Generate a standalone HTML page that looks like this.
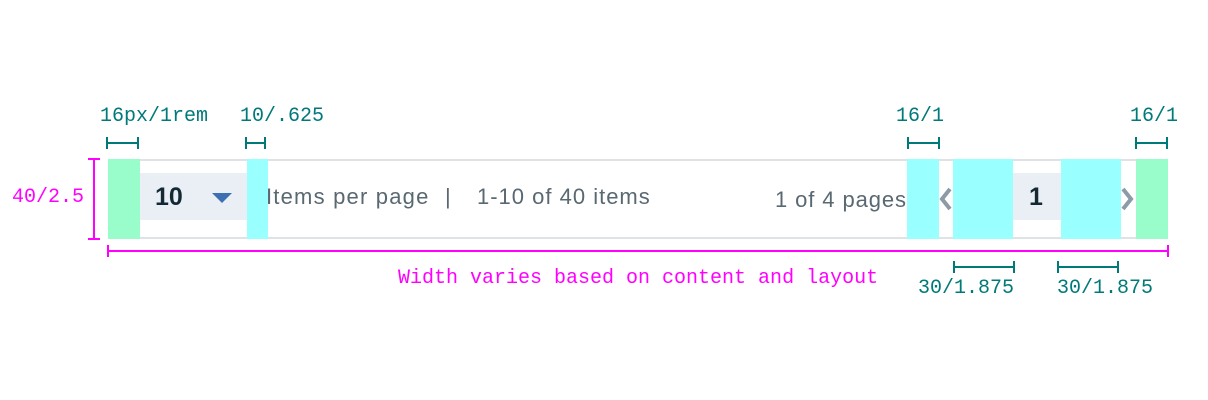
<!DOCTYPE html><html><head><style>
body{margin:0;width:1208px;height:400px;background:#fff;position:relative;overflow:hidden;font-family:"Liberation Sans",sans-serif}
.a{position:absolute}
.m{font-family:"Liberation Mono",monospace;font-size:20px;color:#00797a;white-space:nowrap}
.t{position:absolute;height:2px;background:#007a78}
.t:before,.t:after{content:"";position:absolute;top:-5px;width:2px;height:12px;background:#007a78}
.t:before{left:0}.t:after{right:0}
.s{color:#5a6872;font-size:22px;letter-spacing:0.9px;white-space:nowrap}
</style></head><body>
<div class="a" style="left:108px;top:159px;width:1060px;height:80px;border-top:2px solid #dfe3e6;border-bottom:2px solid #dfe3e6;box-sizing:border-box"></div>
<div class="a" style="left:108px;top:159px;width:32px;height:80px;background:#99fccb"></div>
<div class="a" style="left:140px;top:173px;width:107px;height:47px;background:#eaeff6"></div>
<div class="a" style="left:155px;top:183px;font-size:25px;font-weight:bold;color:#152934">10</div>
<div class="a" style="left:212px;top:193px;width:0;height:0;border-left:10px solid transparent;border-right:10px solid transparent;border-top:10px solid #3d70b2"></div>
<div class="a" style="left:247px;top:159px;width:21px;height:80px;background:#99ffff"></div>
<div class="a s" style="left:266px;top:184px;letter-spacing:1.2px">Items per page</div>
<div class="a s" style="left:445px;top:184px">|</div>
<div class="a s" style="left:477px;top:184px;letter-spacing:1px">1-10 of 40 items</div>
<div class="a s" style="left:775px;top:187px">1 of 4 pages</div>
<div class="a" style="left:907px;top:159px;width:32px;height:80px;background:#99ffff"></div>
<div class="a" style="left:953px;top:159px;width:60px;height:80px;background:#99ffff"></div>
<div class="a" style="left:1013px;top:173px;width:48px;height:47px;background:#eaeff6"></div>
<div class="a" style="left:1029px;top:183px;font-size:25px;font-weight:bold;color:#152934">1</div>
<div class="a" style="left:1061px;top:159px;width:60px;height:80px;background:#99ffff"></div>
<div class="a" style="left:1136px;top:159px;width:32px;height:80px;background:#99fccb"></div>
<svg class="a" style="left:937px;top:186px" width="18" height="26"><path d="M13 3 L5 13 L13 23" fill="none" stroke="#8c9ba5" stroke-width="4"/></svg>
<svg class="a" style="left:1118px;top:186px" width="18" height="26"><path d="M5 3 L13 13 L5 23" fill="none" stroke="#8c9ba5" stroke-width="4"/></svg>
<div class="a m" style="left:100px;top:105px">16px/1rem</div>
<div class="a m" style="left:240px;top:105px">10/.625</div>
<div class="a m" style="left:896px;top:105px">16/1</div>
<div class="a m" style="left:1130px;top:105px">16/1</div>
<div class="t" style="left:106px;top:142px;width:33px"></div>
<div class="t" style="left:245px;top:142px;width:21px"></div>
<div class="t" style="left:907px;top:142px;width:33px"></div>
<div class="t" style="left:1135px;top:142px;width:33px"></div>
<div class="t" style="left:953px;top:266px;width:62px"></div>
<div class="t" style="left:1057px;top:266px;width:62px"></div>
<div class="a m" style="left:918px;top:277px">30/1.875</div>
<div class="a m" style="left:1057px;top:277px">30/1.875</div>
<div class="a" style="left:93px;top:159px;width:2px;height:80px;background:#f0f"></div>
<div class="a" style="left:88px;top:158px;width:12px;height:2px;background:#f0f"></div>
<div class="a" style="left:88px;top:238px;width:12px;height:2px;background:#f0f"></div>
<div class="a m" style="left:12px;top:186px;color:#f0f">40/2.5</div>
<div class="a" style="left:108px;top:250px;width:1061px;height:2px;background:#f0f"></div>
<div class="a" style="left:107px;top:245px;width:2px;height:12px;background:#f0f"></div>
<div class="a" style="left:1167px;top:245px;width:2px;height:12px;background:#f0f"></div>
<div class="a m" style="left:398px;top:267px;color:#f0f">Width varies based on content and layout</div>
</body></html>
